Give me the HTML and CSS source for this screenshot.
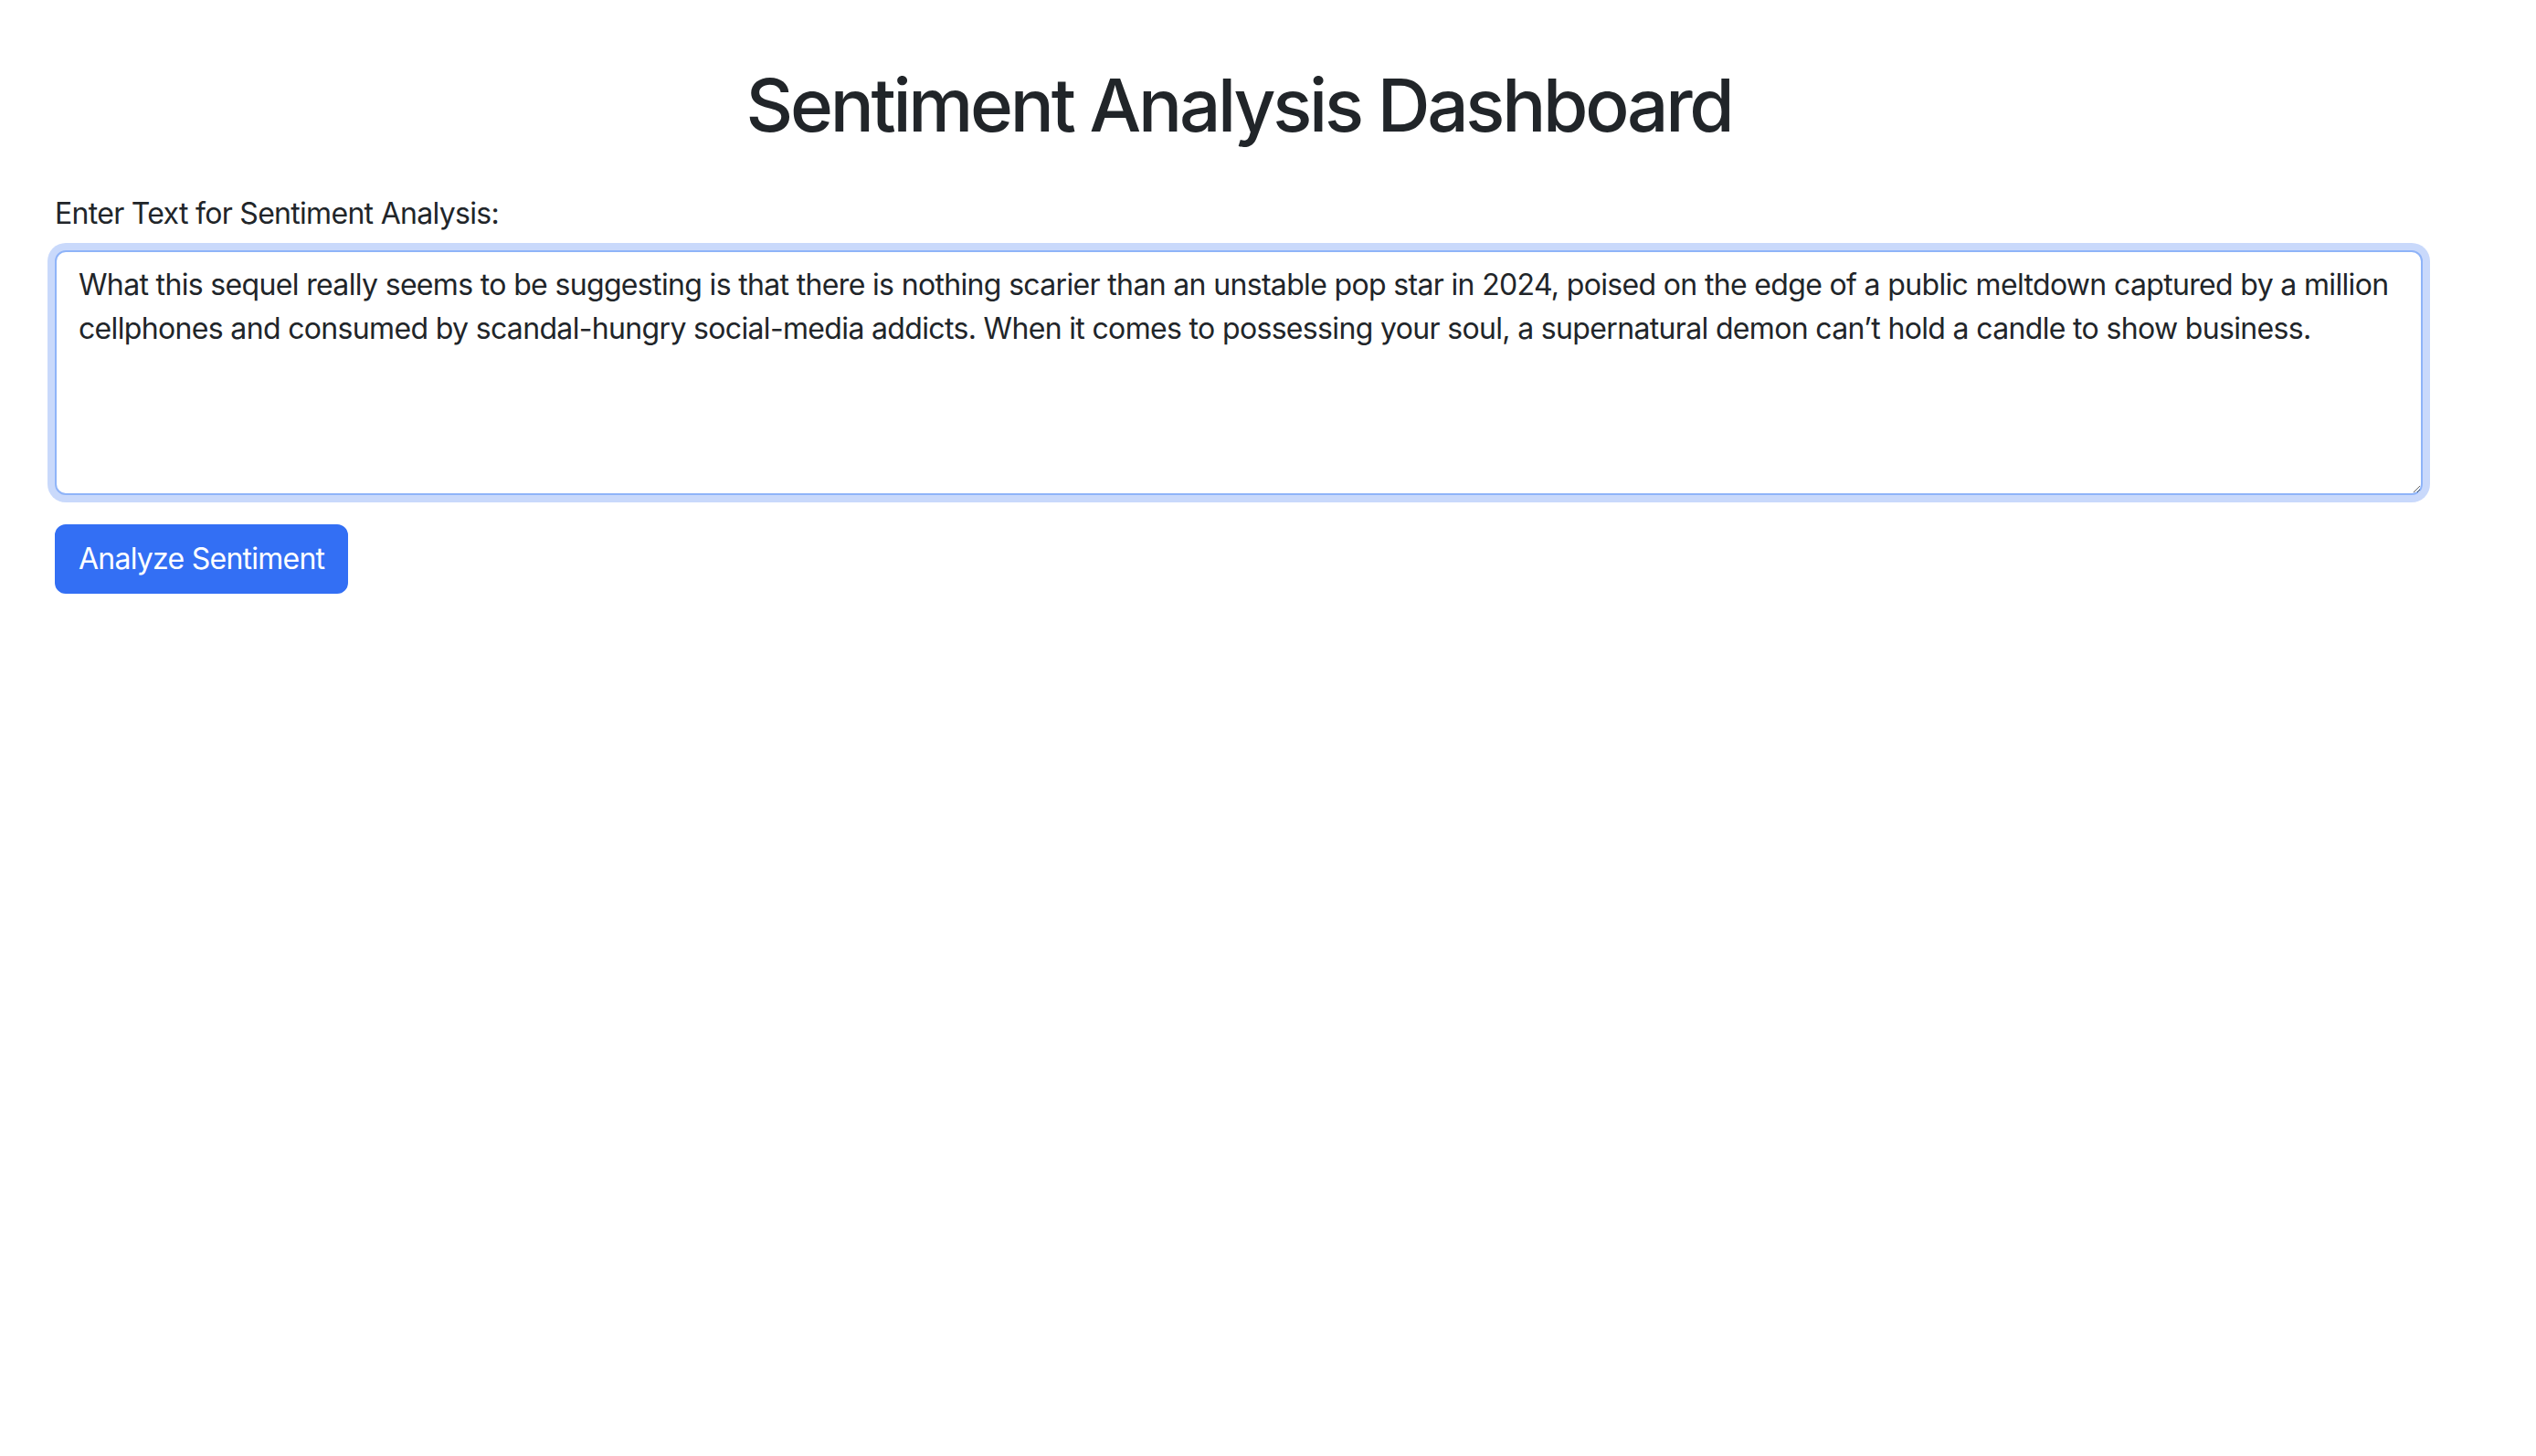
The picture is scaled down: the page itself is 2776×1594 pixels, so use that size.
FILE: index.html
```html
<!DOCTYPE html>
<html lang="en">
<head>
<meta charset="utf-8">
<title>Sentiment Analysis Dashboard</title>
<link rel="stylesheet" href="styles.css">
</head>
<body>
<div class="container">
  <h1 class="title">Sentiment Analysis Dashboard</h1>
  <form class="analysis-form">
    <label class="form-label" for="text-input">Enter Text for Sentiment Analysis:</label>
    <textarea class="form-control is-focused" id="text-input" rows="5">What this sequel really seems to be suggesting is that there is nothing scarier than an unstable pop star in 2024, poised on the edge of a public meltdown captured by a million cellphones and consumed by scandal-hungry social-media addicts. When it comes to possessing your soul, a supernatural demon can’t hold a candle to show business.</textarea>
    <div class="actions">
      <button type="button" class="btn btn-primary">Analyze Sentiment</button>
    </div>
  </form>
</div>
</body>
</html>
```
FILE: styles.css
```css
* {
  box-sizing: border-box;
}

body {
  margin: 0;
  background: #ffffff;
  color: #212529;
  font-family: Inter, "Noto Sans", sans-serif;
  font-size: 32px;
  line-height: 48px;
}

.container {
  width: 2652px;
  padding: 67px 0 0 60px;
}

.title {
  margin: 0 0 47px;
  font-size: 80px;
  line-height: 96px;
  font-weight: 500;
  letter-spacing: -0.041em;
  text-align: center;
  color: #212529;
}

.analysis-form {
  display: flex;
  flex-direction: column;
}

.form-label {
  display: block;
  margin-bottom: 16px;
  letter-spacing: -0.7px;
}

.form-control {
  display: block;
  width: 2592px;
  height: 268px;
  margin: 0 0 32px;
  padding: 12px 24px;
  font-family: inherit;
  font-size: 32px;
  line-height: 48px;
  letter-spacing: -0.66px;
  color: #212529;
  background: #ffffff;
  border: 2px solid #dee2e6;
  border-radius: 12px;
  resize: vertical;
  outline: none;
}

.form-control.is-focused {
  border-color: #8fb4f8;
  box-shadow: 0 0 0 8px #c9d9fb;
}

.actions {
  display: flex;
}

.btn {
  display: inline-block;
  padding: 12px 24px;
  font-family: inherit;
  font-size: 32px;
  line-height: 48px;
  letter-spacing: -0.75px;
  border: 2px solid transparent;
  border-radius: 12px;
  cursor: pointer;
}

.btn-primary {
  color: #ffffff;
  background: #336ff4;
  border-color: #336ff4;
}
```
